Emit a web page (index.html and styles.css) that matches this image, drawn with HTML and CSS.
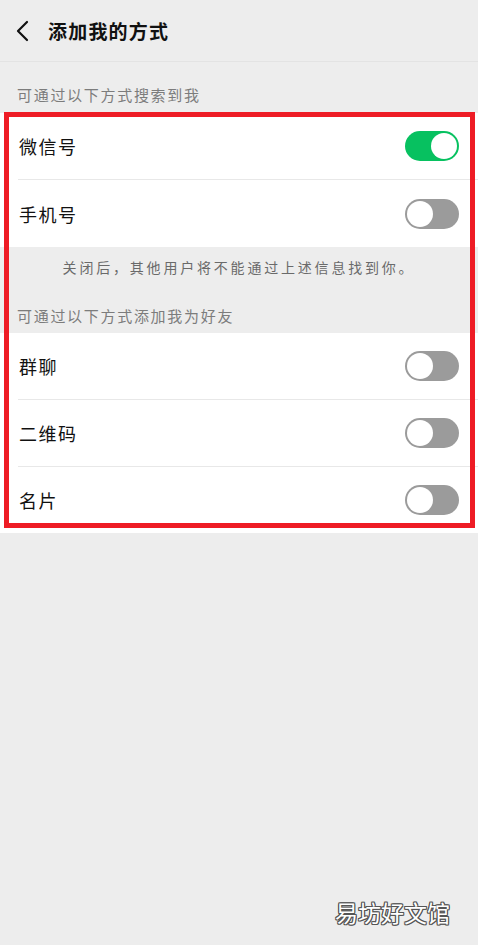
FILE: index.html
```html
<!DOCTYPE html>
<html lang="zh-CN">
<head>
<meta charset="utf-8">
<title>添加我的方式</title>
<link rel="stylesheet" href="styles.css">
</head>
<body>
<div class="page">
  <header class="topbar">
    <svg class="back" width="14" height="22" viewBox="0 0 14 22">
      <path d="M12 2 L3 11 L12 20" fill="none" stroke="#111" stroke-width="2.2" stroke-linecap="round" stroke-linejoin="round"/>
    </svg>
    <h1 class="title">添加我的方式</h1>
  </header>

  <div class="section-label first">可通过以下方式搜索到我</div>
  <div class="group">
    <div class="row">
      <span class="label">微信号</span>
      <span class="switch on"><span class="knob"></span></span>
    </div>
    <div class="row">
      <span class="label">手机号</span>
      <span class="switch"><span class="knob"></span></span>
    </div>
  </div>

  <div class="note">关闭后，其他用户将不能通过上述信息找到你。</div>
  <div class="section-label second">可通过以下方式添加我为好友</div>
  <div class="group compact">
    <div class="row">
      <span class="label">群聊</span>
      <span class="switch"><span class="knob"></span></span>
    </div>
    <div class="row">
      <span class="label">二维码</span>
      <span class="switch"><span class="knob"></span></span>
    </div>
    <div class="row">
      <span class="label">名片</span>
      <span class="switch"><span class="knob"></span></span>
    </div>
  </div>

  <div class="highlight"></div>
  <div class="watermark">易坊好文馆</div>
</div>
</body>
</html>
```

FILE: styles.css
```css
html, body {
  margin: 0;
  padding: 0;
  background: #ededed;
}

body {
  font-family: "Noto Sans CJK SC", "Noto Sans", sans-serif;
  color: #111;
}

.page {
  position: relative;
  width: 478px;
  min-height: 945px;
  background: #ededed;
}

.topbar {
  height: 61px;
  display: flex;
  align-items: center;
  border-bottom: 1px solid #e3e3e3;
  box-sizing: content-box;
}

.back {
  margin-left: 15px;
  margin-right: 19px;
}

.title {
  margin: 0;
  font-size: 19px;
  font-weight: 700;
  letter-spacing: 1.2px;
  line-height: 24px;
}

.section-label {
  padding-left: 17px;
  font-size: 15px;
  line-height: 20px;
  color: #7c7c7c;
  letter-spacing: 1.7px;
}

.section-label.first {
  padding-top: 23px;
  padding-bottom: 8px;
}

.section-label.second {
  padding-top: 0;
  padding-bottom: 7px;
}

.note {
  padding-top: 10px;
  padding-bottom: 29px;
  text-align: center;
  font-size: 14px;
  line-height: 20px;
  color: #6a6a6a;
  letter-spacing: 2.8px;
}

.group {
  background: #fff;
}

.row {
  height: 66px;
  margin-left: 18px;
  padding-right: 19px;
  display: flex;
  align-items: center;
  justify-content: space-between;
  border-bottom: 1px solid #e8e8e8;
}

.row:last-child {
  border-bottom: none;
  height: 67px;
}

.group.compact .row:last-child {
  height: 66px;
}

.label {
  margin-left: 1px;
  font-size: 18px;
  letter-spacing: 1.5px;
}

.switch {
  width: 54px;
  height: 30px;
  border-radius: 15px;
  background: #9b9b9b;
  display: flex;
  align-items: center;
  padding: 0 2px;
  box-sizing: border-box;
}

.switch .knob {
  width: 26px;
  height: 26px;
  border-radius: 50%;
  background: #fff;
}

.switch.on {
  background: #07c160;
  justify-content: flex-end;
}

/* red annotation frame around both option groups */
.highlight {
  position: absolute;
  left: 4px;
  top: 112px;
  width: 471px;
  height: 416px;
  border: 5px solid #ee1c25;
  box-sizing: border-box;
  pointer-events: none;
}

.watermark {
  position: absolute;
  right: 28px;
  top: 896px;
  font-size: 23px;
  line-height: 32px;
  color: #fff;
  text-shadow:
    1px 0 0 #555, -1px 0 0 #555, 0 1px 0 #555, 0 -1px 0 #555,
    1px 1px 0 #555, -1px -1px 0 #555, 1px -1px 0 #555, -1px 1px 0 #555;
}
```
